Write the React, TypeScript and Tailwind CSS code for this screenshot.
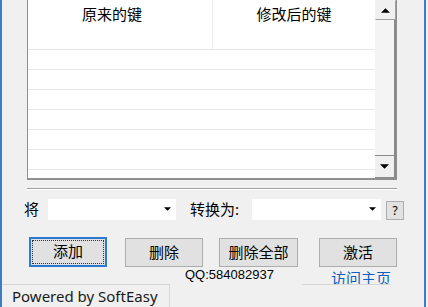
import React from "react";

const Arrow: React.FC<{ down?: boolean; w?: number }> = ({ down, w = 9 }) => (
  <svg width={w} height={Math.ceil(w / 2)} viewBox="0 0 10 5" className="block">
    {down ? <polygon points="0,0 10,0 5,5" fill="#000" /> : <polygon points="0,5 10,5 5,0" fill="#000" />}
  </svg>
);

const Combo: React.FC<{ width: string }> = ({ width }) => (
  <div className={`${width} h-[21px] bg-white flex items-center justify-end pr-[5px]`}>
    <Arrow down w={7} />
  </div>
);

const Btn: React.FC<{ label: string; width: string; focused?: boolean }> = ({ label, width, focused }) =>
  focused ? (
    <div className={`${width} h-[30px] border-2 border-[#2a7ad2] bg-[#e1e1e1] p-[1px]`}>
      <div className="w-full h-full border border-dotted border-[#333] flex items-center justify-center text-[15px]">
        {label}
      </div>
    </div>
  ) : (
    <div className={`${width} h-[29px] border border-[#adadad] bg-[#e1e1e1] flex items-center justify-center text-[15px]`}>
      {label}
    </div>
  );

export default function App() {
  const rows = [0, 1, 2, 3, 4, 5];

  return (
    <div
      className="w-[428px] h-[307px] bg-[#f0f0f0] overflow-hidden text-black"
      style={{ fontFamily: '"Noto Sans", "Noto Sans CJK SC", sans-serif' }}
    >
      <div className="w-[426px] h-full border-l-2 border-r-2 border-[#3c7dc4] flex flex-col">
        {/* list view */}
        <div className="ml-[25px] w-[370px] h-[180px] flex border-l border-r border-b-2 border-[#8f8f8f] bg-white">
          <div className="w-[347px] flex flex-col">
            <div className="h-[50px] flex border-b border-[#e6e6e6] text-[15px]">
              <div className="w-[185px] border-r border-[#ececec] flex justify-center pr-[16px] pt-[3px] leading-[22px]">原来的键</div>
              <div className="flex-1 flex justify-center pt-[3px] leading-[22px]">修改后的键</div>
            </div>
            {rows.map((r) => (
              <div key={r} className="h-[20px] border-b border-[#e8e8e8]" />
            ))}
          </div>
          {/* scrollbar */}
          <div className="w-[21px] flex flex-col bg-[#f0f0f0]">
            <div className="h-[20px] border border-[#f0f0f0] border-b-[#a0a0a0] border-r-[#a0a0a0] flex items-center justify-center">
              <Arrow w={9} />
            </div>
            <div className="flex-1 border-r-2 border-b border-[#8a8a8a] bg-[#f4f4f4]" />
            <div className="h-[22px] border-r-2 border-b border-[#8a8a8a] flex items-center justify-center">
              <Arrow down w={9} />
            </div>
          </div>
        </div>

        {/* etched separator */}
        <div className="ml-[25px] w-[370px] mt-[8px] border-t border-[#a0a0a0] border-b border-b-white" />

        {/* convert row */}
        <div className="mt-[9px] h-[21px] flex items-center text-[15px]">
          <span className="ml-[22px] w-[24px] leading-[21px]">将</span>
          <Combo width="w-[128px]" />
          <span className="ml-[14px] w-[62px] leading-[21px]">转换为:</span>
          <Combo width="w-[129px]" />
          <div className="ml-[5px] w-[18px] h-[19px] mt-[3px] border border-[#adadad] bg-[#e1e1e1] flex items-center justify-center text-[12px]">
            ?
          </div>
        </div>

        {/* buttons */}
        <div className="mt-[17px] flex items-start">
          <div className="ml-[27px]">
            <Btn label="添加" width="w-[78px]" focused />
          </div>
          <div className="ml-[18px] mt-[1px]">
            <Btn label="删除" width="w-[78px]" />
          </div>
          <div className="ml-[16px] mt-[1px]">
            <Btn label="删除全部" width="w-[79px]" />
          </div>
          <div className="ml-[21px] mt-[1px]">
            <Btn label="激活" width="w-[78px]" />
          </div>
        </div>

        {/* info row */}
        <div className="h-[17px] flex items-start overflow-hidden">
          <span
            className="ml-[183px] text-[13px] leading-[16px]"
            style={{ fontFamily: '"Liberation Sans", sans-serif' }}
          >
            QQ:584082937
          </span>
          <span className="ml-[57px] mt-[1px] text-[15px] leading-[20px] text-[#0b5fc0]">访问主页</span>
        </div>

        {/* status bar */}
        <div className="flex-1 flex">
          <div className="w-[168px] border-t border-r border-[#d7d7d7] pl-[10px] flex items-center text-[15px] text-[#1a1a1a]">
            Powered by SoftEasy
          </div>
          <div className="ml-[132px] w-[89px] border-t border-[#d7d7d7]" />
        </div>
      </div>
    </div>
  );
}
